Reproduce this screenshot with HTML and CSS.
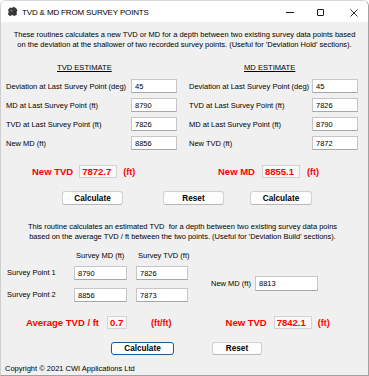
FILE: index.html
```html
<!DOCTYPE html>
<html lang="en">
<head>
    <meta charset="UTF-8">
    <title>TVD &amp; MD FROM SURVEY POINTS</title>
    <link rel="stylesheet" href="styles.css">
</head>
<body>

<div class="window">
    <div class="titlebar">
        <svg class="app-icon" width="11" height="11" viewBox="0 0 11 11">
            <path d="M1 4 L3 1.5 L5 2 L6.5 0.8 L9 2 L10.5 4.5 L9.5 6 L10 8.5 L7.5 10 L5 9 L3 10.2 L0.8 8 L1.8 6 Z" fill="#3a3a3a"/>
            <path d="M3 4 L5 3.5 L6 5 L4 6 Z" fill="#6a6a6a"/>
            <path d="M6.5 6 L8.5 5.5 L8 7.5 Z" fill="#1e1e1e"/>
        </svg>
        <span class="title">TVD &amp; MD FROM SURVEY POINTS</span>
        <div class="controls">
            <span class="ctl-min"></span>
            <span class="ctl-max"></span>
            <svg class="ctl-close" width="8" height="8" viewBox="0 0 8 8">
                <path d="M0.5 0.5 L7.5 7.5 M7.5 0.5 L0.5 7.5" stroke="#1a1a1a" stroke-width="0.9"/>
            </svg>
        </div>
    </div>

    <div class="content">
        <p class="intro">These routines calculates a new TVD or MD for a depth between two existing survey data points based<br>on the deviation at the shallower of two recorded survey points. (Useful for 'Deviation Hold' sections).</p>

        <div class="estimates">
            <section class="panel panel-tvd">
                <h2>TVD ESTIMATE</h2>
                <div class="fields">
                    <div class="field"><label>Deviation at Last Survey Point (deg)</label><input type="text" value="45"></div>
                    <div class="field"><label>MD at Last Survey Point (ft)</label><input type="text" value="8790"></div>
                    <div class="field"><label>TVD at Last Survey Point (ft)</label><input type="text" value="7826"></div>
                    <div class="field"><label>New MD (ft)</label><input type="text" value="8856"></div>
                </div>
                <div class="result">
                    <span class="result-label">New TVD</span>
                    <span class="result-box">7872.7</span>
                    <span class="result-unit">(ft)</span>
                </div>
            </section>

            <section class="panel panel-md">
                <h2>MD ESTIMATE</h2>
                <div class="fields">
                    <div class="field"><label>Deviation at Last Survey Point (deg)</label><input type="text" value="45"></div>
                    <div class="field"><label>TVD at Last Survey Point (ft)</label><input type="text" value="7826"></div>
                    <div class="field"><label>MD at Last Survey Point (ft)</label><input type="text" value="8790"></div>
                    <div class="field"><label>New TVD (ft)</label><input type="text" value="7872"></div>
                </div>
                <div class="result">
                    <span class="result-label">New MD</span>
                    <span class="result-box">8855.1</span>
                    <span class="result-unit">(ft)</span>
                </div>
            </section>
        </div>

        <div class="actions actions-top">
            <button class="btn btn-calc">Calculate</button>
            <button class="btn btn-reset">Reset</button>
            <button class="btn btn-calc2">Calculate</button>
        </div>

        <p class="intro intro-build">This routine calculates an estimated TVD &nbsp;for a depth between two existing survey data poins<br>based on the average TVD / ft between the two points. (Useful for 'Deviation Build' sections).</p>

        <div class="survey">
            <div class="survey-grid">
                <span></span>
                <span class="col-head">Survey MD (ft)</span>
                <span class="col-head">Survey TVD (ft)</span>

                <label>Survey Point 1</label>
                <input type="text" value="8790">
                <input type="text" value="7826">

                <label>Survey Point 2</label>
                <input type="text" value="8856">
                <input type="text" value="7873">
            </div>
            <div class="new-md">
                <label>New MD (ft)</label>
                <input type="text" value="8813">
            </div>
        </div>

        <div class="build-result">
            <span class="result-label">Average TVD / ft</span>
            <span class="result-box box-avg">0.7</span>
            <span class="result-unit unit-avg">(ft/ft)</span>
            <span class="result-label label-tvd">New TVD</span>
            <span class="result-box box-tvd">7842.1</span>
            <span class="result-unit">(ft)</span>
        </div>

        <div class="actions actions-bottom">
            <button class="btn btn-focus">Calculate</button>
            <button class="btn btn-reset2">Reset</button>
        </div>

        <div class="copyright">Copyright © 2021 CWI Applications Ltd</div>
    </div>
</div>

</body>
</html>
```

FILE: styles.css
```css
* {
    box-sizing: border-box;
}

body {
    margin: 0;
    font-family: 'Liberation Sans', Arial, sans-serif;
    font-size: 7.5px;
    color: #000;
    background: #fff;
}

label,
span {
    white-space: nowrap;
}

.window {
    width: 369px;
    height: 376px;
    background: #f0f0f0; /* dialog grey */
    border: 1px solid #a2a2a2;
    border-top-color: #d6d6d6;
    border-left-color: #cfcfcf;
    border-radius: 6px 6px 0 0;
    display: flex;
    flex-direction: column;
    overflow: hidden;
}

/* title bar */
.titlebar {
    height: 21px;
    background: #fff;
    display: flex;
    align-items: center;
    padding-left: 6px;
}

.app-icon {
    margin-top: -1px;
}

.title {
    margin-left: 4px;
    font-size: 8px;
    letter-spacing: -0.15px;
    margin-top: 2px;
}

.controls {
    margin-left: auto;
    display: flex;
    align-items: center;
    padding-right: 10px;
    margin-top: 2px;
}

.ctl-min {
    width: 8px;
    height: 1px;
    background: #1a1a1a;
}

.ctl-max {
    width: 7px;
    height: 7px;
    border: 1px solid #1a1a1a;
    border-radius: 1px;
    margin-left: 23px;
}

.ctl-close {
    margin-left: 26px;
}

/* body */
.content {
    flex: 1;
    display: flex;
    flex-direction: column;
}

.intro {
    margin: 8px 0 0;
    text-align: center;
    line-height: 10px;
}

.intro-build {
    margin-top: 17px;
    padding-right: 4px;
}

.estimates {
    display: grid;
    grid-template-columns: 171px 170px;
    column-gap: 11px;
    margin-top: 13px;
    padding-left: 5px;
}

.panel h2 {
    font-size: 7.6px;
    font-weight: normal;
    text-decoration: underline;
    line-height: 10px;
    margin: 0 0 6px;
}

.panel-tvd h2 {
    padding-left: 51px;
}

.panel-md h2 {
    padding-left: 56px;
}

.panel-md .field label {
    padding-left: 1px;
}

.fields {
    display: flex;
    flex-direction: column;
    gap: 5px;
}

.field {
    display: flex;
    justify-content: space-between;
    align-items: center;
    height: 14px;
}

input {
    width: 46px;
    height: 14px;
    border: 1px solid #c6c6c6;
    border-bottom-color: #a8a8a8;
    background: #fff;
    font: inherit;
    padding: 0 3px;
    margin: 0;
    color: #000;
}

.field input {
    flex-shrink: 0;
}

.result {
    display: flex;
    align-items: center;
    gap: 6px;
    height: 13px;
    margin-top: 15px;
    padding-left: 26px;
}

.panel-md .result {
    padding-left: 30px;
    gap: 7px;
}

.result-label {
    color: #f00;
    font-weight: bold;
    font-size: 9.5px;
}

.result-box {
    width: 38px;
    height: 13px;
    border: 1px solid #d3d3d3;
    background: #f8f8f8;
    color: #f00;
    font-weight: bold;
    font-size: 9.5px;
    line-height: 11px;
    padding-left: 2px;
}

.result-unit {
    color: #f00;
    font-weight: bold;
    font-size: 9px;
}

/* buttons */
.actions {
    display: flex;
}

.actions-top {
    margin-top: 13px;
    padding-left: 61px;
}

.btn {
    height: 14px;
    width: 61px;
    padding: 0;
    background: #fdfdfd;
    border: 1px solid #d0d0d0;
    border-bottom-color: #b8b8b8;
    border-radius: 3px;
    font-family: inherit;
    font-size: 8.2px;
    font-weight: bold;
    color: #000;
}

.btn-reset {
    margin-left: 40px;
}

.btn-calc2 {
    margin-left: 26px;
    width: 62px;
}

.actions-bottom {
    margin-top: 13px;
    padding-left: 110px;
}

.btn-focus {
    width: 63px;
    height: 13px;
    border: 1.5px solid #1d5a93; /* default button outline */
}

.btn-reset2 {
    width: 50px;
    height: 13px;
    margin-left: 38px;
}

/* survey points */
.survey {
    display: flex;
    margin-top: 9px;
}

.survey-grid {
    display: grid;
    grid-template-columns: 58px 53px 52px;
    grid-template-rows: 10px 19px 22px;
    column-gap: 9px;
    align-items: end;
    padding-left: 6px;
}

.survey-grid label {
    line-height: 14px;
}

.survey-grid input {
    width: 100%;
}

.col-head {
    line-height: 10px;
    padding-left: 2px;
}

.new-md {
    display: flex;
    align-items: center;
    gap: 4px;
    align-self: flex-end;
    margin-bottom: 11px;
    margin-left: 23px;
}

.new-md input {
    width: 63px;
    height: 15px;
}

.build-result {
    display: flex;
    align-items: center;
    height: 13px;
    margin-top: 14px;
    padding-left: 25px;
}

.box-avg {
    width: 20px;
    margin-left: 8px;
}

.unit-avg {
    margin-left: 24px;
}

.label-tvd {
    margin-left: 54px;
}

.box-tvd {
    margin-left: 7px;
}

.build-result .result-unit:last-child {
    margin-left: 6px;
}

.copyright {
    margin-top: 9px;
    padding-left: 4px;
    line-height: 10px;
}
```
